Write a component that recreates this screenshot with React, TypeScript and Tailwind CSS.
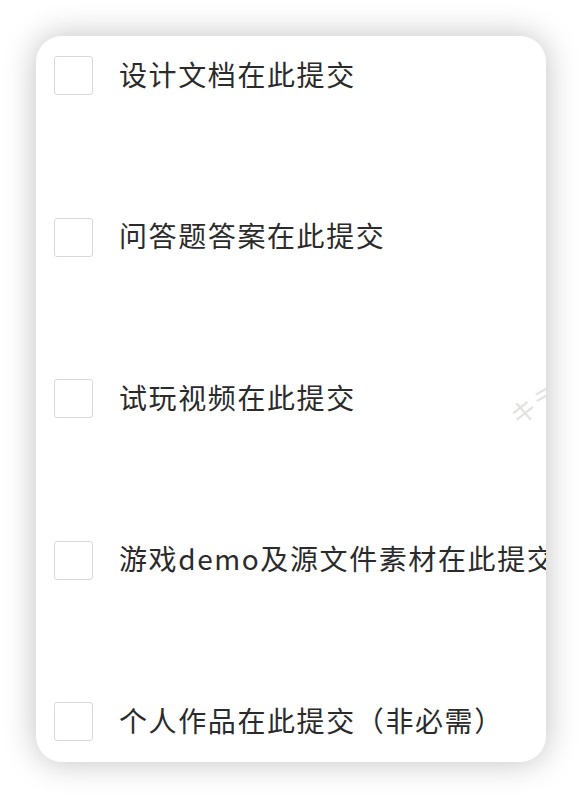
import React from "react";

const items = [
  "设计文档在此提交",
  "问答题答案在此提交",
  "试玩视频在此提交",
  "游戏demo及源文件素材在此提交",
  "个人作品在此提交（非必需）",
];

export default function App() {
  return (
    <div className="w-[582px] h-[798px] bg-white p-[36px]" style={{ fontFamily: '"Noto Sans CJK SC", "Noto Sans", sans-serif' }}>
      <div className="relative w-[510px] h-[726px] bg-white rounded-[26px] overflow-hidden shadow-[0_0_32px_rgba(0,0,0,0.25)]">
        <div className="flex flex-col gap-[122.5px] pt-[20px] pl-[18px]">
          {items.map((t) => (
            <div key={t} className="flex items-center h-[39px]">
              <div className="w-[39px] h-[39px] shrink-0 rounded-[3px] border-[1.5px] border-[#d9d9d9] bg-white" />
              <span className="ml-[26px] pb-[4px] whitespace-nowrap text-[28px] leading-none tracking-[1.6px] text-[#2b2b2b]">{t}</span>
            </div>
          ))}
        </div>
        <div className="absolute left-[472px] top-[348px] -rotate-[30deg] text-[26px] text-[#e2e2e2] whitespace-nowrap select-none">
          キラ
        </div>
      </div>
    </div>
  );
}
